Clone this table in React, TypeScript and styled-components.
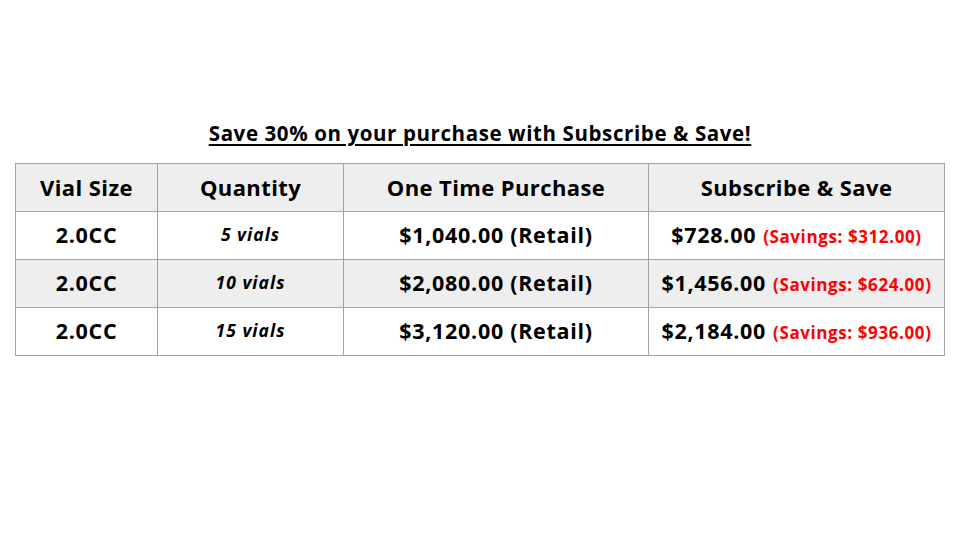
import React from "react";
import styled, { createGlobalStyle } from "styled-components";

const Global = createGlobalStyle`
  html, body { margin: 0; padding: 0; background: #ffffff; }
  body { font-family: "Open Sans", Lato, sans-serif; color: #000; }
`;

const Page = styled.div`
  width: 960px;
  height: 540px;
  display: flex;
  flex-direction: column;
  align-items: center;
  padding-top: 119px;
  box-sizing: border-box;
`;

const Title = styled.h1`
  margin: 0 0 16px 0;
  font-size: 20.5px;
  line-height: 28px;
  font-weight: 700;
  letter-spacing: 0.6px;
  text-decoration: underline;
  text-underline-offset: 3px;
  text-decoration-thickness: 2px;
`;

const Table = styled.table`
  border-collapse: collapse;
  table-layout: fixed;
`;

const Row = styled.tr<{ $shaded?: boolean }>`
  background: ${(p) => (p.$shaded ? "#eeeeee" : "#ffffff")};
  height: 48px;
`;

const HeadCell = styled.th<{ $w: number }>`
  width: ${(p) => p.$w}px;
  border: 1px solid #a3a3a3;
  font-size: 22px;
  font-weight: 700;
  letter-spacing: 0.4px;
  text-align: center;
  padding: 0 0 2px 0;
  vertical-align: middle;
`;

const Cell = styled.td`
  border: 1px solid #a3a3a3;
  text-align: center;
  padding: 0 0 2px 0;
  vertical-align: middle;
  font-size: 21.5px;
  font-weight: 700;
  letter-spacing: 0.7px;
  white-space: nowrap;
`;

const Qty = styled.span`
  font-size: 17.5px;
  font-style: italic;
  font-weight: 700;
  letter-spacing: 1px;
  position: relative;
  top: -2px;
`;

const Savings = styled.span`
  color: #ff0000;
  font-size: 17px;
  font-weight: 700;
  letter-spacing: 0.6px;
  margin-left: 7px;
`;

const rows = [
  { qty: "5 vials", retail: "$1,040.00 (Retail)", sub: "$728.00", save: "(Savings: $312.00)" },
  { qty: "10 vials", retail: "$2,080.00 (Retail)", sub: "$1,456.00", save: "(Savings: $624.00)" },
  { qty: "15 vials", retail: "$3,120.00 (Retail)", sub: "$2,184.00", save: "(Savings: $936.00)" },
];

export default function App() {
  return (
    <>
      <Global />
      <Page>
        <Title>Save 30% on your purchase with Subscribe &amp; Save!</Title>
        <Table>
          <thead>
            <Row $shaded>
              <HeadCell $w={141}>Vial Size</HeadCell>
              <HeadCell $w={185}>Quantity</HeadCell>
              <HeadCell $w={304}>One Time Purchase</HeadCell>
              <HeadCell $w={295}>Subscribe &amp; Save</HeadCell>
            </Row>
          </thead>
          <tbody>
            {rows.map((r, i) => (
              <Row key={r.qty} $shaded={i === 1}>
                <Cell>2.0CC</Cell>
                <Cell>
                  <Qty>{r.qty}</Qty>
                </Cell>
                <Cell>{r.retail}</Cell>
                <Cell>
                  {r.sub}
                  <Savings>{r.save}</Savings>
                </Cell>
              </Row>
            ))}
          </tbody>
        </Table>
      </Page>
    </>
  );
}
